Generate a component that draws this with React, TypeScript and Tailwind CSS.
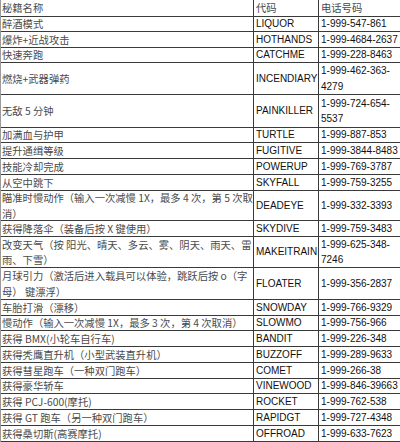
type Row = {
  name: string[]
  code: string
  phone: string[]
  h: string
}

const rows: Row[] = [
  { name: ["醉酒模式"], code: "LIQUOR", phone: ["1-999-547-861"], h: "h-[15px]" },
  { name: ["爆炸+近战攻击"], code: "HOTHANDS", phone: ["1-999-4684-2637"], h: "h-[16px]" },
  { name: ["快速奔跑"], code: "CATCHME", phone: ["1-999-228-8463"], h: "h-[15px]" },
  { name: ["燃烧+武器弹药"], code: "INCENDIARY", phone: ["1-999-462-363-", "4279"], h: "h-[32px]" },
  { name: ["无敌 5 分钟"], code: "PAINKILLER", phone: ["1-999-724-654-", "5537"], h: "h-[33px]" },
  { name: ["加满血与护甲"], code: "TURTLE", phone: ["1-999-887-853"], h: "h-[15px]" },
  { name: ["提升通缉等级"], code: "FUGITIVE", phone: ["1-999-3844-8483"], h: "h-[16px]" },
  { name: ["技能冷却完成"], code: "POWERUP", phone: ["1-999-769-3787"], h: "h-[16px]" },
  { name: ["从空中跳下"], code: "SKYFALL", phone: ["1-999-759-3255"], h: "h-[16px]" },
  { name: ["瞄准时慢动作（输入一次减慢 1X，最多 4 次，第 5 次取", "消）"], code: "DEADEYE", phone: ["1-999-332-3393"], h: "h-[30px]" },
  { name: ["获得降落伞（装备后按 X 键使用）"], code: "SKYDIVE", phone: ["1-999-759-3483"], h: "h-[16px]" },
  { name: ["改变天气（按 阳光、晴天、多云、雾、阴天、雨天、雷", "雨、下雪）"], code: "MAKEITRAIN", phone: ["1-999-625-348-", "7246"], h: "h-[31px]" },
  { name: ["月球引力（激活后进入载具可以体验，跳跃后按 o（字", "母） 键漂浮）"], code: "FLOATER", phone: ["1-999-356-2837"], h: "h-[32px]" },
  { name: ["车胎打滑（漂移）"], code: "SNOWDAY", phone: ["1-999-766-9329"], h: "h-[16px]" },
  { name: ["慢动作（输入一次减慢 1X，最多 3 次，第 4 次取消）"], code: "SLOWMO", phone: ["1-999-756-966"], h: "h-[15px]" },
  { name: ["获得 BMX(小轮车自行车)"], code: "BANDIT", phone: ["1-999-226-348"], h: "h-[16px]" },
  { name: ["获得秃鹰直升机（小型武装直升机）"], code: "BUZZOFF", phone: ["1-999-289-9633"], h: "h-[16px]" },
  { name: ["获得彗星跑车（一种双门跑车）"], code: "COMET", phone: ["1-999-266-38"], h: "h-[16px]" },
  { name: ["获得豪华轿车"], code: "VINEWOOD", phone: ["1-999-846-39663"], h: "h-[15px]" },
  { name: ["获得 PCJ-600(摩托)"], code: "ROCKET", phone: ["1-999-762-538"], h: "h-[16px]" },
  { name: ["获得 GT 跑车（另一种双门跑车）"], code: "RAPIDGT", phone: ["1-999-727-4348"], h: "h-[16px]" },
  { name: ["获得桑切斯(高赛摩托)"], code: "OFFROAD", phone: ["1-999-633-7623"], h: "h-[16px]" },
]

const cjk = "font-['Noto_Sans_CJK_SC',sans-serif] text-[10.3px] text-[#4a4a4a]"
const latin = "font-['Liberation_Sans',Arial,sans-serif] text-[10px] text-[#111]"

function Cell({ lines, className }: { lines: string[]; className: string }) {
  return (
    <div className={`flex flex-col justify-center overflow-hidden whitespace-nowrap border-b border-r border-[#3a3a3a] leading-[15.5px] ${className}`}>
      {lines.map((l, i) => (
        <span key={i}>{l}</span>
      ))}
    </div>
  )
}

export default function App() {
  return (
    <div className="w-[400px] h-[442px] overflow-hidden bg-white">
      <div className="grid grid-cols-[253px_65px_82px] border-l border-[#9a9a9a]">
        <Cell lines={["秘籍名称"]} className={`h-[17px] pl-px ${cjk}`} />
        <Cell lines={["代码"]} className={`h-[17px] pl-[2px] ${cjk}`} />
        <Cell lines={["电话号码"]} className={`h-[17px] pl-[2px] ${cjk}`} />
        {rows.map((r) => (
          <div key={r.code} className="contents">
            <Cell lines={r.name} className={`${r.h} pl-px ${cjk}`} />
            <Cell lines={[r.code]} className={`${r.h} pl-[2px] ${latin}`} />
            <Cell lines={r.phone} className={`${r.h} pl-[2px] ${latin}`} />
          </div>
        ))}
      </div>
    </div>
  )
}
